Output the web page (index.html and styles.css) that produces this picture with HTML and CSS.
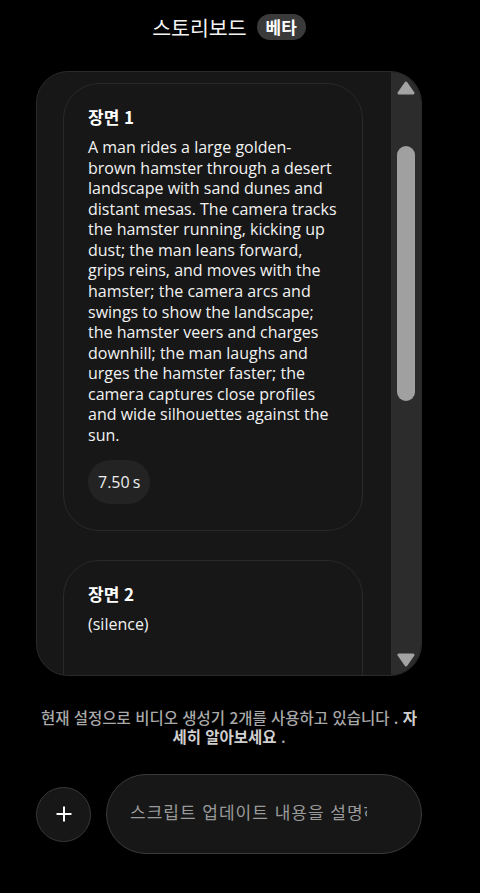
FILE: index.html
```html
<!DOCTYPE html>
<html lang="ko">
<head>
<meta charset="utf-8">
<title>스토리보드</title>
<link rel="stylesheet" href="styles.css">
</head>
<body>
<div class="app">
  <header class="header">
    <h1 class="title">스토리보드</h1>
    <span class="badge">베타</span>
  </header>

  <section class="panel">
    <div class="scroll-content">
      <article class="card">
        <h2 class="card-title">장면 1</h2>
        <p class="card-text">A man rides a large golden-brown hamster through a desert landscape with sand dunes and distant mesas. The camera tracks the hamster running, kicking up dust; the man leans forward, grips reins, and moves with the hamster; the camera arcs and swings to show the landscape; the hamster veers and charges downhill; the man laughs and urges the hamster faster; the camera captures close profiles and wide silhouettes against the sun.</p>
        <span class="chip">7.50<span class="unit">s</span></span>
      </article>
      <article class="card card-open">
        <h2 class="card-title">장면 2</h2>
        <p class="card-text">(silence)</p>
      </article>
    </div>
    <div class="scrollbar">
      <svg class="arrow arrow-up" width="18" height="14" viewBox="0 0 18 14"><polygon points="9,2 16,12 2,12" fill="#a3a3a3" stroke="#a3a3a3" stroke-width="3" stroke-linejoin="round"/></svg>
      <div class="thumb"></div>
      <div class="track-spacer"></div>
      <svg class="arrow arrow-down" width="18" height="14" viewBox="0 0 18 14"><polygon points="2,2 16,2 9,12" fill="#a3a3a3" stroke="#a3a3a3" stroke-width="3" stroke-linejoin="round"/></svg>
    </div>
  </section>

  <p class="notice">현재 설정으로 비디오 생성기 2개를 사용하고 있습니다 . <a class="notice-link">자세히 알아보세요</a> .</p>

  <div class="composer">
    <button class="add-btn" type="button" aria-label="추가">
      <svg width="16" height="16" viewBox="0 0 16 16"><path d="M8 1.5v13M1.5 8h13" stroke="#ffffff" stroke-width="2" stroke-linecap="square"/></svg>
    </button>
    <input class="prompt" type="text" placeholder="스크립트 업데이트 내용을 설명하세요">
  </div>
</div>
</body>
</html>
```
FILE: styles.css
```css
* { box-sizing: border-box; }

body {
  margin: 0;
  background: #000;
  color: #f2f2f2;
  font-family: "Open Sans", "Noto Sans CJK KR", sans-serif;
}

.app {
  width: 386px;
  margin-left: 36px;
}

.header {
  height: 54px;
  display: flex;
  align-items: center;
  justify-content: center;
  gap: 10px;
}

.title {
  margin: 0;
  font-family: "Noto Sans CJK KR", sans-serif;
  font-size: 20.5px;
  font-weight: 400;
  color: #f4f4f4;
  line-height: 26px;
}

.badge {
  height: 26px;
  padding: 0 9px;
  border-radius: 13px;
  background: #3a3a3a;
  font-family: "Noto Sans CJK KR", sans-serif;
  font-weight: 700;
  font-size: 17px;
  line-height: 26px;
  color: #fff;
}

.panel {
  margin-top: 17px;
  height: 605px;
  display: flex;
  background: #171717;
  border: 1px solid #2a2a2a;
  border-radius: 32px;
  overflow: hidden;
}

.scroll-content {
  flex: 1;
  overflow: hidden;
  padding: 11px 0 0 26px;
  display: flex;
  flex-direction: column;
  gap: 29px;
}

.card {
  flex: none;
  width: 300px;
  border: 1px solid #2a2a2a;
  border-radius: 36px;
  padding: 21px 24px 26px;
}

.card-open { min-height: 240px; }

.card-title {
  margin: 0 0 8px;
  font-family: "Noto Sans CJK KR", sans-serif;
  font-size: 17px;
  font-weight: 700;
  line-height: 24px;
  color: #fff;
}

.card-text {
  margin: 0;
  font-size: 16px;
  line-height: 20.57px;
  color: #f2f2f2;
}

.chip {
  display: inline-block;
  margin-top: 15px;
  height: 44px;
  padding: 0 10px;
  border-radius: 22px;
  background: #232323;
  font-size: 16px;
  line-height: 44px;
  color: #eeeeee;
}

.unit { margin-left: 3px; }

.scrollbar {
  width: 30px;
  flex: none;
  background: #2c2c2c;
  display: flex;
  flex-direction: column;
  align-items: center;
}

.arrow { display: block; flex: none; }
.arrow-up { margin-top: 9px; }
.arrow-down { margin-bottom: 8px; }

.thumb {
  flex: none;
  margin-top: 51px;
  width: 18px;
  height: 255px;
  border-radius: 9px;
  background: #a0a0a0;
}

.track-spacer { flex: 1; }

.notice {
  margin: 32px 2px 0;
  text-align: center;
  font-family: "Noto Sans CJK KR", sans-serif;
  font-size: 15.5px;
  line-height: 19px;
  font-weight: 500;
  color: #a9a9a9;
}

.notice-link {
  font-weight: 700;
  color: #cfcfcf;
}

.composer {
  margin-top: 28px;
  display: flex;
  align-items: center;
  gap: 15px;
}

.add-btn {
  flex: none;
  width: 55px;
  height: 55px;
  border-radius: 50%;
  border: 1px solid #383838;
  background: #171717;
  padding: 0;
  display: flex;
  align-items: center;
  justify-content: center;
}

.prompt {
  flex: 1;
  min-width: 0;
  height: 80px;
  border: 1px solid #3a3a3a;
  border-radius: 40px;
  background: #171717;
  padding: 0 54px 6px 23px;
  font-family: "Noto Sans CJK KR", sans-serif;
  font-size: 17px;
  letter-spacing: 1px;
  color: #eee;
  outline: none;
}

.prompt::placeholder { color: #9a9a9a; }
```
